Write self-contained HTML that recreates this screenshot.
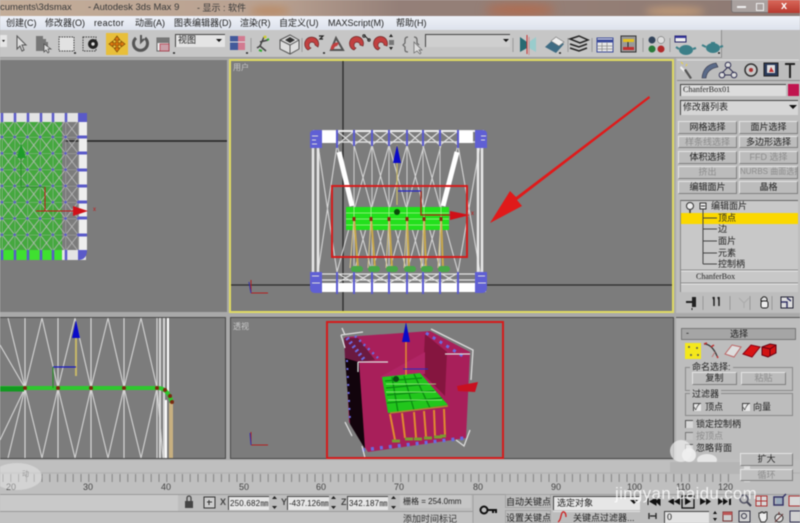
<!DOCTYPE html>
<html><head><meta charset="utf-8"><style>
html,body{margin:0;padding:0;background:#c0c0c0}
#p{position:relative;width:800px;height:523px;overflow:hidden;background:#bdbdbd;font-family:"Liberation Sans","Noto Sans CJK SC",sans-serif;color:#222;filter:blur(.5px)}
#p div,#p span.t{position:absolute;white-space:nowrap}
.t{font-size:9px;line-height:12px}
.btn{background:#bcbcbc;border-top:1px solid #e4e4e4;border-left:1px solid #e4e4e4;border-right:1px solid #808080;border-bottom:1px solid #808080;text-align:center;font-size:9px;line-height:10px;box-sizing:border-box;color:#222}
.dis{color:#8c8c8c}
.fld{background:#e6e6e6;border-top:1px solid #444;border-left:1px solid #444;box-sizing:border-box;font-family:"Liberation Mono",monospace;font-size:9px;line-height:13px;color:#222;overflow:hidden}
.vp{background:#7c7c7c;box-sizing:border-box}
</style></head><body><div id="p">

<!-- title bar -->
<div style="left:0;top:0;width:800px;height:16px;background:linear-gradient(90deg,#c4ae9a 0,#b8a090 35%,#947f78 50%,#957f76 70%,#8d7a74 100%)"></div>
<div style="left:250px;top:6px;width:40px;height:10px;background:#b98d6a;border-radius:50%;filter:blur(4px)"></div>
<div style="left:485px;top:4px;width:70px;height:12px;background:#b06c50;border-radius:50%;filter:blur(5px)"></div>
<div style="left:645px;top:7px;width:60px;height:9px;background:#c09a78;border-radius:50%;filter:blur(4px)"></div>
<div class="t" style="left:0;top:2px;font-size:9.500px;color:#3a3a3a">cuments\3dsmax</div>
<div class="t" style="left:88px;top:2px;font-size:9.500px;color:#3a3a3a">- Autodesk 3ds Max 9</div>
<div class="t" style="left:197px;top:2px;font-size:9px;color:#3a3a3a">- 显示 : 软件</div>
<!-- window buttons -->
<div style="left:731px;top:0;width:69px;height:13px;background:#a9a19f;border:1px solid #77706f;border-top:none;box-sizing:border-box;border-radius:0 0 3px 3px"></div>
<div style="left:768px;top:0;width:32px;height:13px;background:linear-gradient(#d8685a,#b8392f)"></div>
<div style="left:737px;top:6px;width:9px;height:2px;background:#eee"></div>
<div style="left:756px;top:3px;width:6px;height:6px;border:1px solid #eee"></div>
<div class="t" style="left:781px;top:0;color:#fff;font-weight:bold;font-size:11px">x</div>

<!-- menu bar -->
<div style="left:0;top:16px;width:800px;height:14px;background:linear-gradient(#eef1f8,#dde2ec)"></div>
<div class="t" style="left:6px;top:17px">创建(C)</div>
<div class="t" style="left:45px;top:17px">修改器(O)</div>
<div class="t" style="left:94px;top:17px;letter-spacing:.3px">reactor</div>
<div class="t" style="left:135px;top:17px">动画(A)</div>
<div class="t" style="left:174px;top:17px">图表编辑器(D)</div>
<div class="t" style="left:240px;top:17px">渲染(R)</div>
<div class="t" style="left:279px;top:17px">自定义(U)</div>
<div class="t" style="left:328px;top:17px">MAXScript(M)</div>
<div class="t" style="left:396px;top:17px">帮助(H)</div>

<!-- toolbar -->
<div style="left:0;top:30px;width:722px;height:28px;background:#c6c6c6;border-right:1px solid #8f8f8f;border-bottom:1px solid #999;box-sizing:border-box"></div>
<div style="left:722px;top:30px;width:78px;height:28px;background:#bdbdbd"></div>
<div style="left:106px;top:33px;width:22px;height:22px;background:#e8bf3a"></div>
<div class="fld" style="left:175px;top:34px;width:50px;height:13px;background:#e4e4e4;font-family:'Liberation Sans','Noto Sans CJK SC',sans-serif;font-size:9px;line-height:11px;padding-left:2px">视图</div>
<div class="fld" style="left:425px;top:34px;width:85px;height:13px;background:#cfcfcf"></div>
<div style="left:0;top:35px;width:7px;height:12px;background:#e6e6e6"></div>
<svg style="position:absolute;left:0;top:30px" width="800" height="28" viewBox="0 30 800 28">
<path d="M2 40h3l-1.500 2z" fill="#111"/>
<path d="M216 39h6l-3 3zM503 39h6l-3 3z" fill="#111"/>
<path d="M17 36v13l3-3 2 5 2-1-2-5h4z" fill="#ddd" stroke="#555"/>
<path d="M36 36h7v3h3v3h2v9h-12z" fill="#777"/><path d="M44 44v8l2-2 2 3 1-1-1-3h3z" fill="#ddd" stroke="#444" stroke-width=".7"/>
<rect x="59" y="37" width="15" height="14" fill="#e2e2e2" stroke="#444" stroke-dasharray="1.500 1"/>
<rect x="83" y="37" width="13" height="14" fill="none" stroke="#444" stroke-dasharray="1.500 1"/><circle cx="93" cy="44" r="5" fill="#222"/><circle cx="93" cy="44" r="1.700" fill="#ddd"/>
<path d="M117 36l3 4h-2v3h3v-2l4 3-4 3v-2h-3v3h2l-3 4-3-4h2v-3h-3v2l-4-3 4-3v2h3v-3h-2z" fill="#e07a10" stroke="#7a4a08" stroke-width=".7"/>
<path d="M136 38a7 7 0 1 0 9 0" fill="none" stroke="#555" stroke-width="3"/><path d="M141 35v7l3-3" fill="none" stroke="#555" stroke-width="2"/>
<rect x="157" y="38" width="12" height="13" fill="#eee" stroke="#666"/><rect x="160" y="44" width="9" height="7" fill="#c9a0a8" stroke="#b03040" stroke-width=".7"/><path d="M157 38h12v5h-12z" fill="#777"/>
<rect x="230" y="36" width="8" height="14" fill="#445a9a"/><rect x="238" y="36" width="7" height="14" fill="#d27a90"/><path d="M230 42h15" stroke="#ddd"/>
<path d="M251 38v14M302 38v14M513 38v14M568 38v14M592 38v14M643 38v14M670 38v14" stroke="#999"/>
<path d="M264 37l-4 9-3 2M260 46l6 5M260 42l8-2" stroke="#444" stroke-width="1.500" fill="none"/><path d="M259 50l3 1M267 40l2-1" stroke="#3a3" stroke-width="2"/><circle cx="265" cy="37" r="1.500" fill="#cc3"/>
<path d="M280 40l10-5 9 5v9l-9 5-10-5z" fill="#ddd" stroke="#555"/><path d="M280 40l10 5 9-5M290 45v9" stroke="#555" fill="none"/><path d="M285 40l5-3 5 3-5 3z" fill="#333"/>
<path d="M308 50a7 7 0 1 1 10-3l-3-2a3 3 0 1 0-4 3z" fill="#c04040" stroke="#602020" stroke-width=".6"/>
<path d="M319 36h4l-3 3h3" fill="none" stroke="#222" stroke-width="1.200"/>
<path d="M331 50l5-12 7 12z" fill="none" stroke="#555" stroke-width="2"/><path d="M331 50a6 6 0 0 1 8-7l-2 3a3 3 0 0 0-3 3z" fill="#c04040"/>
<path d="M354 50a7 7 0 1 1 9-4l-3-1a3 3 0 1 0-4 3z" fill="#c04040" stroke="#602020" stroke-width=".6"/>
<path d="M364 35l5 5" stroke="#222"/><circle cx="364" cy="36" r="1.200" fill="none" stroke="#222"/><circle cx="369" cy="40" r="1.200" fill="none" stroke="#222"/>
<path d="M378 50a7 7 0 1 1 9-4l-3-1a3 3 0 1 0-4 3z" fill="#c04040" stroke="#602020" stroke-width=".6"/>
<path d="M389 37h4l-2-3zM389 47h4l-2 3z" fill="#222"/><rect x="389" y="40" width="5" height="5" fill="#777"/>
<path d="M408 37q-3 0-3 3v3l-2 2 2 2v3q0 2 3 2M414 37q3 0 3 3v3l2 2" fill="none" stroke="#666" stroke-width="1.200"/><path d="M414 42v11l3-2 3 3 1-1-2-3h3z" fill="#ddd" stroke="#666" stroke-width=".7"/>
<path d="M520 37l7 5v6l-7 4z" fill="#2a6a72"/><path d="M536 37l-7 5v6l7 4z" fill="#9cc"/><path d="M527 35v19" stroke="#c33"/><path d="M529 37v18" stroke="#c77" stroke-width=".7"/>
<path d="M545 47l10-9 9 6-8 9z" fill="#3f6c84"/><path d="M551 41l5-4 8 5-5 4z" fill="#eee" stroke="#777" stroke-width=".6"/>
<path d="M570 39l9-3 9 4-8 3zM570 44l9 3 8-3M570 48l9 3 8-3" fill="none" stroke="#222" stroke-width="1.500"/>
<rect x="597" y="38" width="16" height="14" fill="#e8e8e8" stroke="#3a4a9a"/><path d="M597 41h16" stroke="#3a4a9a" stroke-width="3"/><path d="M602 42v10M607 42v10M597 46h16M597 49h16" stroke="#888" stroke-width=".7"/>
<rect x="621" y="36" width="15" height="16" fill="#999" stroke="#333"/><rect x="623" y="39" width="11" height="3" fill="#e3c020"/><rect x="623" y="47" width="11" height="3" fill="#c03030"/><path d="M628 42v5" stroke="#222"/>
<circle cx="652" cy="40" r="3.500" fill="#33445a"/><circle cx="661" cy="40" r="3.500" fill="#ddd" stroke="#555" stroke-width=".5"/><circle cx="652" cy="49" r="3.500" fill="#2a7a3a"/><circle cx="661" cy="49" r="3.500" fill="#b02a2a"/>
<rect x="675" y="36" width="11" height="6" fill="#eee" stroke="#226"/><path d="M675 36h11v2h-11z" fill="#339"/>
<ellipse cx="686" cy="50" rx="7" ry="5" fill="#3c7f88"/><path d="M679 49l-3-2M693 49l3-1" stroke="#3c7f88" stroke-width="2"/>
<ellipse cx="713" cy="48" rx="7" ry="5" fill="#3c7f88"/><path d="M706 47l-4-2M720 47l3-1" stroke="#3c7f88" stroke-width="2"/><rect x="711" y="42" width="4" height="2" fill="#3c7f88"/>
<path d="M74 53h2M173 53h2M246 53h2M323 53h2M559 53h2M718 53h2" stroke="#222" stroke-width="1.500"/>
</svg>
<div style="left:0;top:58px;width:676px;height:402px;background:#a9a9a9"></div>

<!-- viewports -->
<div class="vp" style="left:0;top:60px;width:227px;height:252px"></div>
<div class="vp" style="left:229px;top:59px;width:445px;height:254px;border:2px solid #e0db62"></div>
<div class="vp" style="left:0;top:317px;width:226px;height:142px;border:1px solid #4a4a4a;border-left:none"></div>
<div class="vp" style="left:230px;top:317px;width:444px;height:142px;border:1px solid #4a4a4a"></div>
<div class="t" style="left:233px;top:62px;font-size:8px;color:#c8c8c8">用户</div>
<div class="t" style="left:233px;top:321px;font-size:8px;color:#c8c8c8">透视</div>

<svg style="position:absolute;left:0;top:0" width="800" height="523" viewBox="0 0 800 523">
<defs>
<pattern id="gx" x="2" y="137" width="12.700" height="16.300" patternUnits="userSpaceOnUse"><path d="M0 0L12.700 16.300M12.700 0L0 16.300M0 0H12.700M0 0V16.300" stroke="#bcbcbc" stroke-width=".8" fill="none"/><circle cx="0" cy="0" r="1.300" fill="#5a5ac8"/><circle cx="12.700" cy="0" r="1.300" fill="#5a5ac8"/><circle cx="0" cy="16.300" r="1.300" fill="#5a5ac8"/><circle cx="12.700" cy="16.300" r="1.300" fill="#5a5ac8"/></pattern>
<clipPath id="bl"><rect x="0" y="318" width="226" height="140"/></clipPath>
</defs>
<!-- TL viewport -->
<path d="M65 141H227" stroke="#222" stroke-width="1.500"/>
<rect x="0" y="121" width="62" height="130" fill="#44a83e"/>
<rect x="0" y="121" width="80" height="130" fill="url(#gx)"/>
<rect x="0" y="113" width="86" height="9" fill="#e4e4e4"/>
<rect x="0" y="250" width="62" height="10" fill="#3fe030"/>
<rect x="62" y="250" width="24" height="10" fill="#e4e4e4"/>
<rect x="79" y="122" width="8" height="128" fill="#eee"/>
<path d="M2 113v9M15 113v9M28 113v9M41 113v9M53 113v9M66 113v9M2 250v10M15 250v10M28 250v10M41 250v10M53 250v10M66 250v10" stroke="#5a5ac8" stroke-width="2.500"/>
<path d="M78 137H87M78 153H87M78 170H87M78 186H87M78 202H87M78 218H87M78 235H87" stroke="#5a5ac8" stroke-width="3"/>
<path d="M78 113h9v9h-9zM78 250h9q0 10-9 10z" fill="#5a5ac8"/>
<path d="M21 143l5 15h-9z" fill="#1e9c2a"/><path d="M21 158V187H45" stroke="#2c8c2c" stroke-width="1" fill="none"/>
<path d="M45 187V211M36 211H74" stroke="#c01818" stroke-width="1"/><path d="M73 206l15 5-15 5z" fill="#d01018"/>
<text x="93" y="211" font-size="6" fill="#c01818" font-family="Liberation Sans">x</text>

<!-- BL viewport -->
<g clip-path="url(#bl)">
<path d="M25 318V458M58 318V458M91 318V458M124 318V458M157 318V458" stroke="#d8d8d8" stroke-width="1.200"/>
<path d="M0 345L25 388L8 318M25 388L42 318M42 318L58 388L75 318M75 318L91 388L108 318M108 318L124 388L141 318M141 318L157 388M0 440L25 388L42 458M25 388L8 458M58 388L42 458M58 388L75 458M91 388L75 458M91 388L108 458M124 388L108 458M124 388L141 458M157 388L141 458M157 388L163 458" stroke="#d4d4d4" stroke-width="1.100" fill="none"/>
<path d="M160 318V458M164 318V458" stroke="#d5d5d5" stroke-width="2"/><path d="M168 318V392" stroke="#fff" stroke-width="2"/>
<path d="M166 400V458" stroke="#fff" stroke-width="2"/>
<path d="M0 388H158Q168 388 172 403" stroke="#2ec82e" stroke-width="4" fill="none"/>
<path d="M0 389H24" stroke="#129a20" stroke-width="5"/>
<path d="M171 403V458" stroke="#c8b080" stroke-width="4"/>
<circle cx="25" cy="388" r="2" fill="#7a2a10"/><circle cx="58" cy="388" r="2" fill="#7a2a10"/><circle cx="91" cy="388" r="2" fill="#7a2a10"/><circle cx="124" cy="388" r="2" fill="#7a2a10"/><circle cx="157" cy="388" r="2" fill="#7a2a10"/><circle cx="165" cy="390" r="2" fill="#7a2a10"/><circle cx="170" cy="396" r="2" fill="#7a2a10"/><circle cx="172" cy="402" r="2" fill="#7a2a10"/>
<path d="M76 320l-4 18h8z" fill="#0a0ac8"/><path d="M76 338V376" stroke="#c8b868" stroke-width="2"/>
<path d="M53 367H76" stroke="#1818c0" stroke-width="1.200"/><path d="M53 367V388" stroke="#2a8c2a" stroke-width="1.200"/>
</g>

<!-- TR viewport -->
<path d="M343 61V311M231 285H672" stroke="#2a2a2a" stroke-width="1.300"/>
<path d="M337 145L372 272M354 145L389 272M372 145L407 272M389 145L424 272M407 145L441 272M423 145L458 272M372 145L337 272M389 145L354 272M407 145L372 272M424 145L389 272M441 145L407 272M458 145L423 272M337 145L318 272M318 145L337 272M458 145L480 272M480 145L458 272" stroke="#d4d4d4" stroke-width="1.100" fill="none"/>
<path d="M313 145V272M318 145V272M482 145V272M478 145V272" stroke="#e8e8e8" stroke-width="2.500"/>
<path d="M354 145V272M372 145V272M389 145V272M407 145V272M423 145V272M440 145V272" stroke="#cfcfcf" stroke-width="1"/>
<path d="M339 152L352 206M457 152L443 206" stroke="#fff" stroke-width="5"/>
<path d="M337 131L354 145M354 131L337 145M354 131L372 145M372 131L354 145M372 131L389 145M389 131L372 145M389 131L407 145M407 131L389 145M407 131L423 145M423 131L407 145M423 131L440 145M440 131L423 145M440 131L458 145M458 131L440 145" stroke="#e0e0e0" stroke-width="1.200"/>
<path d="M313 131H484" stroke="#eee" stroke-width="2"/><path d="M313 142H484" stroke="#ddd" stroke-width="1.500"/>
<rect x="322" y="131" width="15" height="12" fill="#fff"/><rect x="458" y="131" width="15" height="12" fill="#fff"/>
<rect x="322" y="283" width="164" height="9" fill="#fff"/>
<path d="M337 273L354 283M354 273L337 283M354 273L372 283M372 273L354 283M372 273L389 283M389 273L372 283M389 273L407 283M407 273L389 283M407 273L423 283M423 273L407 283M423 273L440 283M440 273L423 283M440 273L458 283M458 273L440 283M313 274H484M313 280H484" stroke="#e4e4e4" stroke-width="1.200"/>
<path d="M337 130V148M354 130V146M372 130V146M389 130V146M407 130V146M423 130V146M440 130V146M458 130V148M337 272V294M354 272V294M372 272V294M389 272V294M407 272V294M423 272V294M440 272V294M458 272V294" stroke="#5a5ad0" stroke-width="2"/>
<path d="M310 134q0-4 5-4h7v18h-12zM487 134q0-4-5-4h-7v18h12zM310 287q0 6 5 6h7v-21h-12zM487 287q0 6-5 6h-7v-21h12z" fill="#5f5fd4"/>
<path d="M312 136h6M312 140h4M312 144h5M481 136h5M481 140h4M312 276h7M312 283h8M478 276h7M478 283h8" stroke="#ddd"/>
<rect x="346" y="207" width="103" height="23" fill="#22e01c"/>
<path d="M346 213H449M346 219H449M346 225H449M354 207V230M371 207V230M389 207V230M407 207V230M424 207V230M441 207V230" stroke="#a8f090" stroke-width=".8"/>
<path d="M354 217L358 268M371 217L375 268M389 217L392 268M407 217L409 268M424 217L426 268M441 217L443 268" stroke="#c9a84a" stroke-width="2"/>
<path d="M354 218L350 268M371 218L368 268M389 218L386 268M407 218L404 268M424 218L421 268M441 218L438 268" stroke="#d8c890" stroke-width="1"/>
<path d="M354 217v4M371 217v4M389 217v4M407 217v4M424 217v4M441 217v4" stroke="#8a2a10" stroke-width="3"/>
<path d="M354 269h6M371 269h6M389 269h6M407 269h6M424 269h6M441 269h6" stroke="#48a848" stroke-width="6" stroke-linecap="round"/>
<path d="M397 145V205" stroke="#c8b868" stroke-width="1.200"/>
<path d="M397 145l-4 18h8z" fill="#0a0ac8"/>
<path d="M398 191H421" stroke="#2424c4" stroke-width="1.200"/>
<path d="M421 191V215H450" stroke="#b02010" stroke-width="1.200" fill="none"/>
<path d="M450 211l20 4-20 5z" fill="#d01018"/>
<circle cx="397" cy="212" r="3" fill="#0a4a0a"/>
<text x="471" y="215" font-size="6" fill="#c01818" font-family="Liberation Sans">x</text>
<rect x="332" y="186" width="135" height="71" fill="none" stroke="#d41c1c" stroke-width="2"/>
<path d="M649 96L516 197L510 191L490 223L522 206L517 200L650 98z" fill="#e01a1a"/>
<!-- axes -->
<path d="M251 293V280M251 293H268" stroke="#b02020"/><path d="M251 293l-2-11" stroke="#3030b0"/>
<path d="M251 445V432M251 445H268" stroke="#b02020"/><path d="M251 445l-1-12" stroke="#3030b0"/>

<!-- perspective -->
<path d="M345 337L430 331L470 352L466 438L368 452L349 422Z" fill="#a81f5a"/>
<path d="M425 334L447 352L445 396L423 374Z" fill="#85153f"/>
<path d="M380 377L425 352V374Z" fill="#b02565"/>
<path d="M345 358L359 362L365 449L350 424Z" fill="#12040c"/>
<path d="M344 338L358 338L375 360L359 362L345 358Z" fill="#6a1a40"/>
<path d="M382 377L420 373L448 405L388 413Z" fill="#22c61c"/>
<path d="M385 381L422 378M386 388L428 384M387 395L434 391M387 403L442 398M392 377L398 412M404 376L414 410M414 374L430 408" stroke="#0b8a12" stroke-width="1.300" fill="none"/>
<path d="M386 384h50M386 392h50M388 400h54" stroke="#a4f08a" stroke-width=".7"/>
<circle cx="396" cy="379" r="3" fill="#0c4a14"/>
<path d="M390 413L448 406" stroke="#a88a30" stroke-width="1.500"/>
<path d="M390 414L395 440M402 413L405 438M414 412L416 438M424 411L426 437M434 410L435 436M444 409L445 435" stroke="#e08a30" stroke-width="2"/>
<path d="M392 441h8M405 439h8M414 439h8M424 438h8M434 437h8M440 436h6" stroke="#7a9a30" stroke-width="3"/>
<path d="M347 338L365 361" stroke="#6a6ae0" stroke-width="4" stroke-dasharray="2 3"/>
<path d="M355 336L378 358" stroke="#6a6ae0" stroke-width="2.500" stroke-dasharray="2 4"/>
<path d="M426 333L466 358" stroke="#6a6ae0" stroke-width="3" stroke-dasharray="3 5"/>
<path d="M362 450L465 438" stroke="#6a6ae0" stroke-width="3.500" stroke-dasharray="3 6"/>
<path d="M347 360L350 420" stroke="#6a6ae0" stroke-width="2" stroke-dasharray="2 6"/>
<path d="M341 335L363 332M341 335L345 348M431 329L473 350L471 380M358 362H388M358 362V372M445 354H470M345 422L352 436M470 430L464 446L456 440M362 446L365 458M345 335L342 328" stroke="#dcdcdc" stroke-width="1.300" fill="none"/>
<path d="M406 342V375" stroke="#e08a30" stroke-width="1.500"/>
<path d="M406 322l-4 20h8z" fill="#0a0ac8"/>
<path d="M403 369H428" stroke="#2a2ac0"/>
<path d="M457 386L478 382L475 392L458 391Z" fill="#c81020"/>
<rect x="327" y="322" width="176" height="136" fill="none" stroke="#d41c1c" stroke-width="2"/>
</svg>

<!-- right panel -->
<div style="left:676px;top:58px;width:124px;height:402px;background:#bdbdbd"></div>
<div style="left:677px;top:80px;width:123px;height:1px;background:#8a8a8a"></div>
<svg style="position:absolute;left:676px;top:58px" width="124" height="245" viewBox="676 58 124 245">
<path d="M677 60h122" stroke="#ddd"/>
<path d="M681 66l4 4-1 2-4-4z" fill="#f0f0f0"/><path d="M684 70l6 9 2-1-6-9z" fill="#555"/><path d="M686 66l1-2M681 62l2 2" stroke="#e8d040"/>
<path d="M702 78q1-13 14-15l2 4q-11 2-12 11z" fill="#5a6a88" stroke="#334" stroke-width=".6"/>
<circle cx="728" cy="65" r="2.800" fill="#ddd" stroke="#335"/><circle cx="722" cy="75" r="2.800" fill="#ddd" stroke="#335"/><circle cx="734" cy="75" r="2.800" fill="#ddd" stroke="#335"/><path d="M728 67L722 73M728 67L734 73M724 75H731" stroke="#335"/>
<circle cx="751" cy="70" r="6" fill="#c9c9c9" stroke="#333" stroke-width="1.500"/><circle cx="751" cy="70" r="2" fill="#a33"/>
<rect x="764" y="63" width="14" height="13" fill="#2a3a5a" stroke="#222"/><rect x="767" y="65" width="8" height="8" fill="#ddd"/><path d="M769 72l2-5 3 5" fill="#b33"/>
<path d="M785 63h10v2h-4v13h-2v-13h-4z" fill="#222"/>
</svg>
<div class="fld" style="left:680px;top:84px;width:106px;height:12px;background:#dcdcdc;line-height:10px;font-size:8px;padding-left:2px;font-family:'Liberation Serif',serif">ChanferBox01</div>
<div style="left:788px;top:84px;width:11px;height:12px;background:#c0154f"></div>
<div class="fld" style="left:680px;top:100px;width:118px;height:15px;background:#d6d6d6;font-family:'Liberation Sans','Noto Sans CJK SC',sans-serif;font-size:9px;padding-left:2px">修改器列表</div>
<div style="left:789px;top:105px;width:0;height:0;border:4px solid transparent;border-top:4px solid #111"></div>

<div class="btn" style="left:678px;top:121px;width:59px;height:13px">网格选择</div>
<div class="btn" style="left:739px;top:121px;width:59px;height:13px">面片选择</div>
<div class="btn dis" style="left:678px;top:136px;width:59px;height:12px">样条线选择</div>
<div class="btn" style="left:739px;top:136px;width:59px;height:12px">多边形选择</div>
<div class="btn" style="left:678px;top:151px;width:59px;height:13px">体积选择</div>
<div class="btn dis" style="left:739px;top:151px;width:59px;height:13px">FFD 选择</div>
<div class="btn dis" style="left:678px;top:166px;width:59px;height:13px">挤出</div>
<div class="btn dis" style="left:739px;top:166px;width:59px;height:13px;font-size:8px;overflow:hidden">NURBS 曲面选择</div>
<div class="btn" style="left:678px;top:181px;width:59px;height:13px">编辑面片</div>
<div class="btn" style="left:739px;top:181px;width:59px;height:13px">晶格</div>

<div style="left:680px;top:200px;width:118px;height:92px;background:#c8c8c8;border-top:1px solid #666;border-left:1px solid #888;box-sizing:border-box"></div>
<div style="left:681px;top:213px;width:117px;height:11px;background:#fbd800"></div>
<svg style="position:absolute;left:680px;top:200px" width="118" height="92" viewBox="680 200 118 92">
<circle cx="690" cy="206" r="3.500" fill="#eee" stroke="#333"/><path d="M690 210v3" stroke="#333" stroke-width="1.500"/>
<rect x="700" y="203" width="6" height="6" fill="#eee" stroke="#333"/><path d="M701 206h4" stroke="#333"/>
<path d="M703 209V264M703 218H717M703 229H717M703 241H717M703 253H717M703 264H717" stroke="#444"/>
<path d="M681 270H798M681 283H798" stroke="#8c8c8c"/><path d="M681 271H798M681 284H798" stroke="#e8e8e8"/>
</svg>
<div class="t" style="left:711px;top:200px">编辑面片</div>
<div class="t" style="left:718px;top:212px">顶点</div>
<div class="t" style="left:718px;top:223px">边</div>
<div class="t" style="left:718px;top:235px">面片</div>
<div class="t" style="left:718px;top:247px">元素</div>
<div class="t" style="left:718px;top:258px">控制柄</div>
<div class="t" style="left:696px;top:271px;font-size:8px;font-family:'Liberation Serif',serif">ChanferBox</div>

<svg style="position:absolute;left:676px;top:293px" width="124" height="20" viewBox="676 293 124 20">
<path d="M686 301h6v-4h4v10h-4v-4h-6z" fill="#222"/><path d="M692 308v2" stroke="#222"/>
<path d="M703 296v14M730 296v14M772 296v14M750 296v14" stroke="#999"/>
<path d="M714 297v9M719 297v9M713 297l1 3M718 297l1 3" stroke="#222" stroke-width="1.500"/>
<path d="M739 298l5 5 5-5M744 303v5" stroke="#aaa" fill="none"/>
<path d="M763 297a3 3 0 0 1 4 2v2h-6v-2z" fill="#ddd" stroke="#222"/><rect x="761" y="301" width="7" height="7" rx="2" fill="#eee" stroke="#222"/>
<rect x="781" y="297" width="12" height="11" fill="#ddd" stroke="#223"/><path d="M781 302h6v6M787 298l4 3" stroke="#336" stroke-width="1.500" fill="none"/>
</svg>
<div style="left:676px;top:313px;width:124px;height:4px;background:#a9a9a9"></div>
<div style="left:676px;top:317px;width:124px;height:143px;background:#bdbdbd;border-top:1px solid #555;box-sizing:border-box"></div>

<div style="left:681px;top:328px;width:115px;height:12px;background:#a5a5a5;border:1px solid #777;box-sizing:border-box"></div>
<div class="t" style="left:686px;top:327px">-</div>
<div class="t" style="left:730px;top:328px">选择</div>
<div style="left:685px;top:343px;width:16px;height:16px;background:#f4e81c"></div>
<svg style="position:absolute;left:685px;top:342px" width="100" height="20" viewBox="685 342 100 20">
<circle cx="689" cy="347" r="1" fill="#555"/><circle cx="697" cy="348" r="1" fill="#555"/><circle cx="691" cy="355" r="1" fill="#555"/><circle cx="698" cy="355" r="1" fill="#555"/>
<path d="M704 344Q712 344 717 356" stroke="#333" stroke-width="1.200" fill="none"/><path d="M704 344l3-1M711 347l3-2M717 356l1 2" stroke="#b33" stroke-width="1.500"/><path d="M715 352l-3 5" stroke="#b77"/>
<path d="M725 354l7-9 9 2-7 10z" fill="#ddd" stroke="#b66"/>
<path d="M743 354l8-9 9 2-8 10z" fill="#d81414" stroke="#801"/>
<path d="M762 347l8-3 6 1v8l-8 4-6-2z" fill="#d01414" stroke="#601"/><path d="M770 349l6-4M770 349v7M762 347l8 2" stroke="#601" fill="none"/>
</svg>

<div style="left:685px;top:367px;width:108px;height:24px;border:1px solid #8a8a8a;box-sizing:border-box"></div>
<div class="t" style="left:690px;top:361px;background:#bdbdbd;padding:0 2px">命名选择:</div>
<div class="btn" style="left:692px;top:372px;width:45px;height:13px">复制</div>
<div class="btn dis" style="left:741px;top:372px;width:45px;height:13px">粘贴</div>

<div style="left:685px;top:393px;width:108px;height:23px;border:1px solid #8a8a8a;box-sizing:border-box"></div>
<div class="t" style="left:690px;top:388px;background:#bdbdbd;padding:0 2px">过滤器</div>
<div style="left:693px;top:403px;width:8px;height:8px;background:#e8e8e8;border-top:1px solid #444;border-left:1px solid #444;box-sizing:border-box;font-size:8px;line-height:7px">✓</div>
<div class="t" style="left:705px;top:401px">顶点</div>
<div style="left:742px;top:403px;width:8px;height:8px;background:#e8e8e8;border-top:1px solid #444;border-left:1px solid #444;box-sizing:border-box;font-size:8px;line-height:7px">✓</div>
<div class="t" style="left:753px;top:401px">向量</div>

<div style="left:685px;top:420px;width:8px;height:8px;background:#d8d8d8;border-top:1px solid #555;border-left:1px solid #555;box-sizing:border-box"></div>
<div class="t" style="left:696px;top:418px">锁定控制柄</div>
<div style="left:685px;top:432px;width:8px;height:8px;background:#c4c4c4;border-top:1px solid #777;border-left:1px solid #777;box-sizing:border-box"></div>
<div class="t dis" style="left:696px;top:430px">按顶点</div>
<div style="left:685px;top:444px;width:8px;height:8px;background:#d8d8d8;border-top:1px solid #555;border-left:1px solid #555;box-sizing:border-box"></div>
<div class="t" style="left:696px;top:442px">忽略背面</div>

<!-- timeline -->
<div style="left:0;top:460px;width:800px;height:34px;background:#bfbfbf"></div>
<svg style="position:absolute;left:0;top:460px" width="800" height="35" viewBox="0 460 800 35">
<defs><pattern id="tk" x="2" y="474" width="7.800" height="9" patternUnits="userSpaceOnUse"><path d="M1 0V8" stroke="#858585" stroke-width="1"/></pattern></defs>
<rect x="0" y="474" width="735" height="8" fill="url(#tk)"/>
<path d="M0 473H800" stroke="#a0a0a0" stroke-width=".6"/>
</svg>
<div class="t" style="left:6px;top:481px;font-size:9px;color:#444">20</div>
<div class="t" style="left:83px;top:481px;font-size:9px;color:#444">30</div>
<div class="t" style="left:161px;top:481px;font-size:9px;color:#444">40</div>
<div class="t" style="left:239px;top:481px;font-size:9px;color:#444">50</div>
<div class="t" style="left:316px;top:481px;font-size:9px;color:#444">60</div>
<div class="t" style="left:394px;top:481px;font-size:9px;color:#444">70</div>
<div class="t" style="left:473px;top:481px;font-size:9px;color:#444">80</div>
<div class="t" style="left:551px;top:481px;font-size:9px;color:#444">90</div>
<div class="t" style="left:627px;top:481px;font-size:9px;color:#444">100</div>
<div class="t" style="left:676px;top:481px;font-size:9px;color:#444">110</div>
<div class="t" style="left:718px;top:481px;font-size:9px;color:#444">120</div>

<!-- watermark clouds -->
<div style="left:-8px;top:463px;width:50px;height:27px;background:rgba(235,235,235,.45);border-radius:50%"></div>
<div class="t" style="left:22px;top:469px;font-size:7px;color:#9a9a9a">动</div>
<div style="left:670px;top:440px;width:22px;height:22px;background:rgba(240,240,240,.7);border-radius:50%"></div>
<div style="left:682px;top:448px;width:14px;height:14px;background:rgba(240,240,240,.9);border-radius:50%"></div>
<div style="left:697px;top:454px;width:20px;height:12px;background:rgba(240,240,240,.8);border-radius:50%"></div>
<div style="left:670px;top:462px;width:70px;height:12px;background:#b5b5b5"></div>
<div style="left:744px;top:462px;width:6px;height:20px;background:rgba(240,240,240,.6)"></div>
<div class="btn" style="left:740px;top:453px;width:53px;height:13px">扩大</div>
<div class="btn dis" style="left:740px;top:469px;width:53px;height:12px;background:#c0c0c0">循环</div>

<!-- status -->
<div style="left:0;top:494px;width:800px;height:29px;background:#bdbdbd;border-top:1px solid #9c9c9c;box-sizing:border-box"></div>
<div style="left:0;top:495px;width:178px;height:16px;background:#c9c9c9"></div>
<div style="left:0;top:511px;width:473px;height:1px;background:#9a9a9a"></div>
<div style="left:0;top:512px;width:473px;height:11px;background:#c2c2c2"></div>
<svg style="position:absolute;left:180px;top:494px" width="320" height="29" viewBox="180 494 320 29">
<rect x="185" y="501" width="8" height="7" fill="#444"/><path d="M187 501v-3a2 2 0 0 1 4 0v3" fill="none" stroke="#444" stroke-width="1.300"/>
<rect x="204" y="497" width="11" height="11" fill="#ccc" stroke="#333"/><path d="M209 500v5M207 502h5" stroke="#333"/>
<path d="M272 499h5l-2.500-3zM272 506h5l-2.500 3zM331 499h5l-2.500-3zM331 506h5l-2.500 3zM391 499h5l-2.500-3zM391 506h5l-2.500 3z" fill="#222"/>
<path d="M473 494v29M501 494v29" stroke="#a0a0a0"/>
<circle cx="484" cy="510" r="3.500" fill="none" stroke="#111" stroke-width="2"/><path d="M488 510h9M493 510v3M496 510v3" stroke="#111" stroke-width="2"/>
</svg>
<div class="t" style="left:220px;top:496px;font-size:9px;font-weight:bold;color:#444">X</div>
<div class="fld" style="left:228px;top:496px;width:41px;height:14px;font-size:8px;font-family:'Liberation Sans',sans-serif;letter-spacing:.2px;padding-left:1px">250.682㎜</div>
<div class="t" style="left:281px;top:496px;font-size:9px;font-weight:bold;color:#444">Y</div>
<div class="fld" style="left:287px;top:496px;width:42px;height:14px;font-size:8px;font-family:'Liberation Sans',sans-serif;padding-left:1px">-437.126㎜</div>
<div class="t" style="left:341px;top:496px;font-size:9px;font-weight:bold;color:#444">Z</div>
<div class="fld" style="left:347px;top:496px;width:41px;height:14px;font-size:8px;font-family:'Liberation Sans',sans-serif;letter-spacing:.2px;padding-left:1px">342.187㎜</div>
<div style="left:400px;top:495px;width:71px;height:13px;background:#c6c6c6"></div>
<div class="t" style="left:403px;top:496px;font-size:8px">栅格 = 254.0mm</div>
<div class="t" style="left:403px;top:513px;color:#333">添加时间标记</div>
<div class="t" style="left:506px;top:496px">自动关键点</div>
<div class="t" style="left:506px;top:512px">设置关键点</div>
<div style="left:505px;top:494px;width:46px;height:14px;border:1px solid #a4a4a4;box-sizing:border-box"></div>
<div style="left:505px;top:510px;width:46px;height:13px;border:1px solid #a4a4a4;box-sizing:border-box"></div>
<div class="fld" style="left:553px;top:496px;width:87px;height:14px;font-family:'Liberation Sans','Noto Sans CJK SC',sans-serif;font-size:9px;line-height:12px;padding-left:3px">选定对象</div>
<div style="left:630px;top:500px;width:0;height:0;border:4px solid transparent;border-top:4px solid #111"></div>
<div style="left:553px;top:511px;width:87px;height:12px;background:#bcbcbc;border-top:1px solid #e2e2e2;box-sizing:border-box"></div>
<div class="t" style="left:573px;top:512px">关键点过滤器...</div>
<svg style="position:absolute;left:556px;top:511px" width="14" height="12" viewBox="556 511 14 12"><path d="M558 522q2-1 3-6t3-4q2 1 2 5" fill="none" stroke="#c22" stroke-width="1.300"/></svg>
<svg style="position:absolute;left:640px;top:470px" width="160" height="53" viewBox="640 470 160 53">
<path d="M648 498v7M656 498l-6 3.500 6 3.500zM660 498l-4 3.500 4 3.500z" fill="#111" stroke="#111"/>
<path d="M674 498l-6 3.500 6 3.500zM680 498l-6 3.500 6 3.500z" fill="#111"/>
<rect x="682" y="496" width="12" height="12" fill="none" stroke="#111" stroke-width="1.300"/><path d="M685 498v7l6-3.500z" fill="#111"/>
<path d="M700 498l6 3.500-6 3.500zM706 498l5 3.500-5 3.500z" fill="#111"/>
<path d="M718 498l5 3.500-5 3.500zM723 498l5 3.500-5 3.500zM729 498h2v7h-2z" fill="#111"/>
<path d="M650 516h6M649 513v6M656 513v6" stroke="#222" stroke-width="1.300"/>
<circle cx="744" cy="499" r="4" fill="none" stroke="#556" stroke-width="1.500"/><path d="M747 502l4 4" stroke="#445" stroke-width="2"/>
<rect x="756" y="496" width="11" height="10" fill="#d8d8d8" stroke="#a33"/><path d="M761 496v10M756 501h11" stroke="#a33"/>
<path d="M774 497h9v8h-9zM783 497l3-3" fill="none" stroke="#336" stroke-width="1.500"/><rect x="776" y="498" width="6" height="6" fill="#9ab"/>
<rect x="789" y="496" width="12" height="10" fill="#d8d8d8" stroke="#a33"/>
<rect x="723" y="512" width="9" height="9" fill="#ccc" stroke="#733"/><path d="M723 512h9v3h-9z" fill="#b55"/>
<rect x="739" y="511" width="11" height="11" fill="#d0d0d0" stroke="#334"/><circle cx="744" cy="516" r="2.500" fill="none" stroke="#334"/>
<path d="M759 517v-4h2v-1h2v1h2v-1h2v7l-2 3h-4z" fill="#eee" stroke="#333"/>
<circle cx="779" cy="518" r="4" fill="#ddd" stroke="#333"/><path d="M779 512v3M775 522l8-8" stroke="#633"/>
<rect x="790" y="511" width="11" height="11" fill="#d0d0d0" stroke="#335"/>
</svg>
<div class="fld" style="left:664px;top:511px;width:45px;height:12px;background:#e2e2e2;font-family:'Liberation Sans',sans-serif;font-size:9px;line-height:11px;padding-left:2px">0</div>
<svg style="position:absolute;left:712px;top:510px" width="8" height="13" viewBox="712 510 8 13"><path d="M713 514h4l-2-3zM713 518h4l-2 3z" fill="#111"/></svg>
<div style="left:615px;top:483px;font-size:17px;line-height:22px;color:rgba(255,255,255,.78);letter-spacing:.3px;font-family:'Liberation Sans',sans-serif">jingyan.baidu.com</div>
</div></body></html>
